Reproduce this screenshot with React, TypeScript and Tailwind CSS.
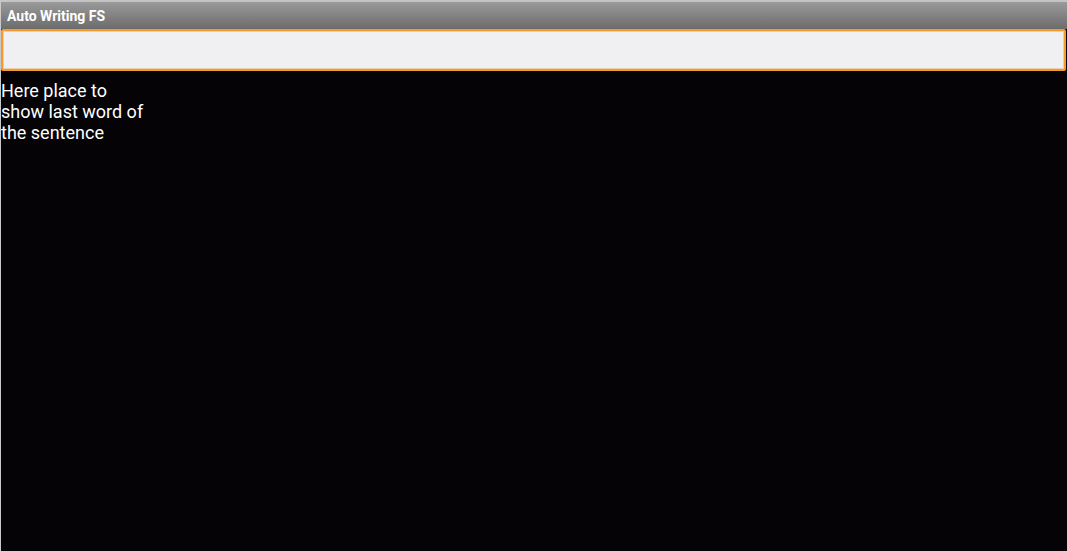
import React from "react";

export default function App() {
  return (
    <div className="w-[1067px] h-[551px] bg-[#050305] flex flex-col overflow-hidden border-l border-[#c9c9c9]" style={{ fontFamily: "Roboto, 'Noto Sans', sans-serif" }}>
      <div className="h-[29px] shrink-0 flex items-center pl-[6px] pt-[1px] border-t-2 border-[#c4c4c4] bg-gradient-to-b from-[#9a9a9a] to-[#6c6c6c]">
        <span className="text-white font-bold text-[14px] leading-none">Auto Writing FS</span>
      </div>
      <div className="h-[42px] shrink-0 mr-[1px] border-2 border-[#f39a2a] rounded-[2px] bg-[#f0f0f2] shadow-[inset_0_0_0_1px_#e8d0b0]" />
      <div className="pt-[9px] w-[147px] text-white text-[18px] leading-[21px]">
        Here place to show last word of the sentence
      </div>
    </div>
  );
}
